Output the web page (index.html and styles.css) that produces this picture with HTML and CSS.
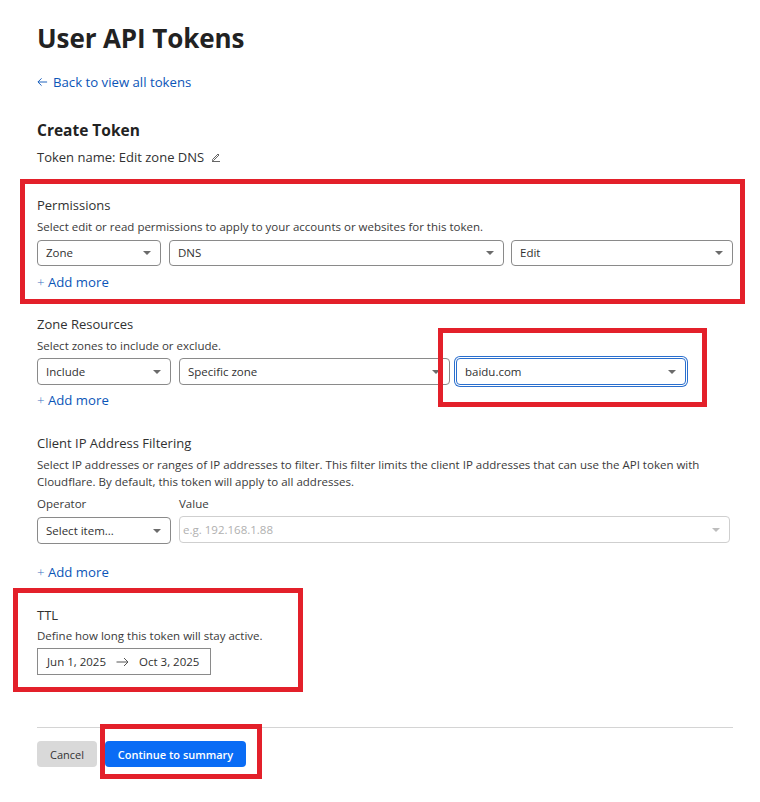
FILE: index.html
```html
<!DOCTYPE html>
<html lang="en">
<head>
<meta charset="utf-8">
<title>User API Tokens</title>
<link rel="stylesheet" href="styles.css">
</head>
<body>
<div class="page">
  <h1 class="title">User API Tokens</h1>
  <a class="back" href="#"><svg class="back-arrow" viewBox="0 0 12 10" width="11" height="10"><path d="M11 5H1.5M5 1L1 5l4 4" fill="none" stroke="currentColor" stroke-width="1"/></svg>Back to view all tokens</a>

  <h2 class="subtitle">Create Token</h2>
  <div class="token-name">Token name: Edit zone DNS <svg class="pencil" viewBox="0 0 10 10" width="10" height="10"><path d="M1.5 7.5L7 2l1 1-5.5 5.5H1.5z" fill="none" stroke="#555" stroke-width="0.9"/><path d="M1 9.5h8" stroke="#555" stroke-width="0.9"/></svg></div>

  <section class="section perms">
    <div class="label">Permissions</div>
    <div class="desc">Select edit or read permissions to apply to your accounts or websites for this token.</div>
    <div class="row row-perms">
      <div class="select"><span>Zone</span><i class="caret"></i></div>
      <div class="select"><span>DNS</span><i class="caret"></i></div>
      <div class="select"><span>Edit</span><i class="caret"></i></div>
    </div>
    <a class="add" href="#"><span class="plus">+</span> Add more</a>
  </section>

  <section class="section zones">
    <div class="label">Zone Resources</div>
    <div class="desc">Select zones to include or exclude.</div>
    <div class="row row-zones">
      <div class="select"><span>Include</span><i class="caret"></i></div>
      <div class="select"><span>Specific zone</span><i class="caret"></i></div>
      <div class="select focused"><span>baidu.com</span><i class="caret"></i></div>
    </div>
    <a class="add" href="#"><span class="plus">+</span> Add more</a>
  </section>

  <section class="section ips">
    <div class="label">Client IP Address Filtering</div>
    <div class="desc desc-wide">Select IP addresses or ranges of IP addresses to filter. This filter limits the client IP addresses that can use the API token with Cloudflare. By default, this token will apply to all addresses.</div>
    <div class="row row-ips">
      <div class="field-label">Operator</div>
      <div class="field-label">Value</div>
      <div class="select"><span>Select item...</span><i class="caret"></i></div>
      <div class="select disabled"><span class="placeholder">e.g. 192.168.1.88</span><i class="caret"></i></div>
    </div>
    <a class="add add-ip" href="#"><span class="plus">+</span> Add more</a>
  </section>

  <section class="section ttl">
    <div class="label">TTL</div>
    <div class="desc">Define how long this token will stay active.</div>
    <div class="daterange"><span>Jun 1, 2025</span><svg class="arrow" viewBox="0 0 13 10" width="13" height="10"><path d="M0.5 5H12M8 1l4 4-4 4" fill="none" stroke="#555" stroke-width="1"/></svg><span>Oct 3, 2025</span></div>
  </section>

  <hr class="divider">

  <div class="actions">
    <button class="btn btn-cancel" type="button">Cancel</button>
    <button class="btn btn-primary" type="button">Continue to summary</button>
  </div>

  <div class="mark mark-perms"></div>
  <div class="mark mark-zone"></div>
  <div class="mark mark-ttl"></div>
  <div class="mark mark-btn"></div>
</div>
</body>
</html>
```
FILE: styles.css
```css
* { box-sizing: border-box; }
html, body { margin: 0; padding: 0; background: #fff; }
body {
  font-family: "Open Sans", "Noto Sans", "Liberation Sans", sans-serif;
  color: #313131;
}
.page {
  position: relative;
  width: 760px;
  min-height: 802px;
  padding: 22px 27px 0 37px;
}
.title {
  margin: 0;
  font-size: 26px;
  line-height: 32px;
  font-weight: 700;
  color: #222;
  letter-spacing: -0.1px;
}
.back {
  display: flex;
  align-items: center;
  gap: 5px;
  margin-top: 19px;
  font-size: 13.2px;
  line-height: 18px;
  color: #0b55b8;
  text-decoration: none;
  width: max-content;
}
.back-arrow { display: block; }
.subtitle {
  margin: 29px 0 0;
  font-size: 15.5px;
  line-height: 20px;
  font-weight: 700;
  color: #222;
}
.token-name {
  margin-top: 8px;
  font-size: 13px;
  line-height: 18px;
  display: flex;
  align-items: center;
  gap: 4px;
}
.pencil { display: block; margin-left: 3px; }
.section { display: flex; flex-direction: column; }
.perms { margin-top: 30px; }
.zones { margin-top: 24px; }
.ips { margin-top: 25px; }
.ttl { margin-top: 25px; }
.label {
  font-size: 13px;
  line-height: 18px;
  color: #313131;
}
.desc {
  margin-top: 5px;
  font-size: 11.5px;
  line-height: 16px;
  color: #3a3a3a;
}
.desc-wide { line-height: 17px; margin-top: 4px; max-width: 696px; }
.ttl .desc { margin-top: 4px; }
.row { display: grid; gap: 8px; }
.row-perms { grid-template-columns: 124px 335px 221px; gap: 8px; margin-top: 5px; }
.row-perms .select { height: 26px; }
.row-perms .select:nth-child(3) { margin-left: -1px; }
.row-zones { grid-template-columns: 134px 271px 228px; gap: 8px; margin-top: 4px; }
.row-zones .select:nth-child(3) { margin-left: -2px; }
.row-ips { grid-template-columns: 134px 551px; column-gap: 8px; row-gap: 5px; margin-top: 6px; }
.field-label { font-size: 11.5px; line-height: 16px; color: #3a3a3a; }
.select {
  position: relative;
  height: 27px;
  border: 1px solid #8a8a8a;
  border-radius: 4px;
  display: flex;
  align-items: center;
  padding: 0 24px 1px 8px;
  font-size: 11.5px;
  color: #313131;
  background: #fff;
}
.select span { white-space: nowrap; }
.caret {
  position: absolute;
  right: 9px;
  top: 50%;
  margin-top: -2px;
  width: 0;
  height: 0;
  border-left: 4px solid transparent;
  border-right: 4px solid transparent;
  border-top: 4px solid #6b6b6b;
}
.select.focused {
  border: 1px solid #2a6fce;
  box-shadow: 0 0 0 1px #fff, 0 0 0 2px #2a6fce;
}
.select.disabled { border-color: #cfcfcf; }
.select.disabled .caret { border-top-color: #bdbdbd; }
.placeholder { color: #b0b0b0; }
.row-ips .disabled { padding-left: 3px; height: 27px; margin-top: -1px; }
.add {
  margin-top: 7px;
  font-size: 13.2px;
  line-height: 18px;
  color: #0b55b8;
  text-decoration: none;
  width: max-content;
}
.zones .add { margin-top: 6px; }
.add-ip { margin-top: 19px; }
.plus { font-weight: 300; color: #3d6fc0; }
.daterange {
  margin-top: 4px;
  width: 174px;
  height: 27px;
  border: 1px solid #8a8a8a;
  display: flex;
  align-items: center;
  gap: 10px;
  padding: 0 9px;
  font-size: 11.5px;
  color: #313131;
}
.arrow { display: block; }
.divider {
  margin: 52px 0 0;
  border: 0;
  border-top: 1px solid #d4d4d4;
  width: 696px;
}
.actions { display: flex; gap: 8px; margin-top: 13px; }
.btn {
  height: 26px;
  border: 0;
  border-radius: 4px;
  font-family: inherit;
  font-size: 11px;
  padding: 0;
  cursor: pointer;
}
.btn-cancel { background: #d9d9d9; color: #333; width: 60px; }
.btn-primary { background: #0a6cf5; color: #fff; font-weight: 600; width: 141px; }
.mark {
  position: absolute;
  border: 5px solid #e3202a;
  pointer-events: none;
}
.mark-perms { left: 20px; top: 179px; width: 725px; height: 125px; }
.mark-zone { left: 438px; top: 328px; width: 269px; height: 79px; }
.mark-ttl { left: 13px; top: 588px; width: 290px; height: 104px; }
.mark-btn { left: 100px; top: 724px; width: 162px; height: 55px; }
```
